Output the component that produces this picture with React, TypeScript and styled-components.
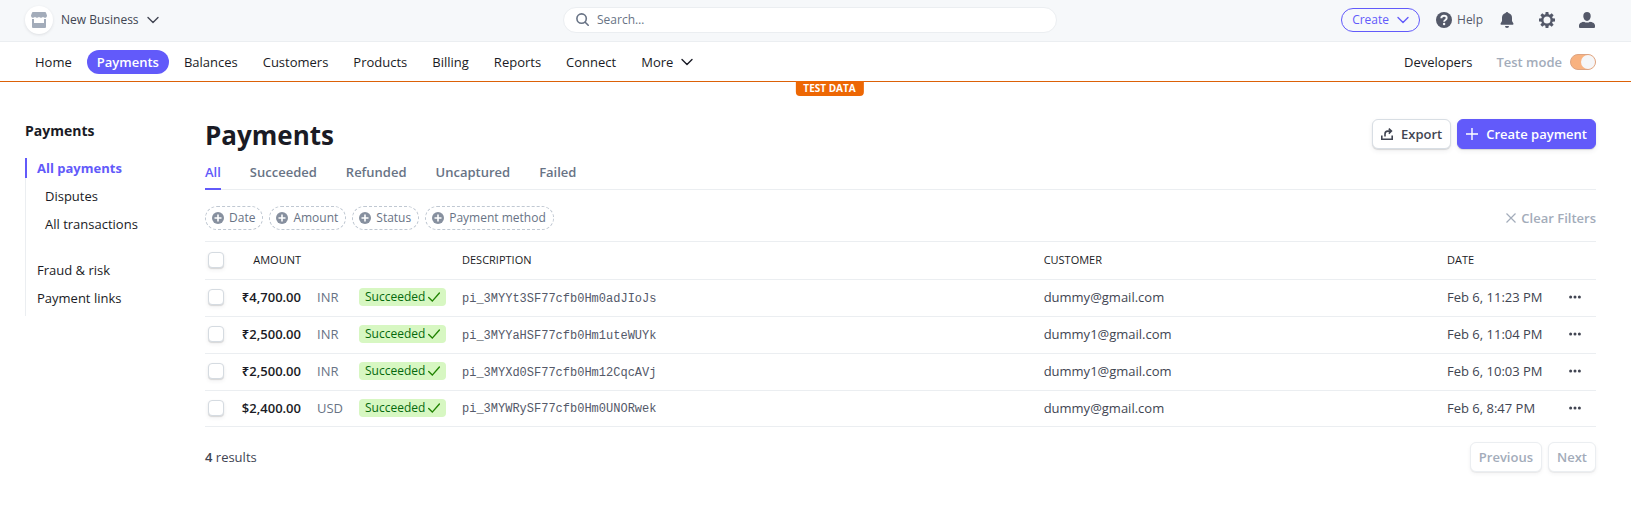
import React from "react";
import styled, { createGlobalStyle, css } from "styled-components";

const color = {
  text: "#1a1b25",
  body: "#414552",
  muted: "#687385",
  faint: "#a3acba",
  icon: "#545969",
  line: "#ebeef1",
  brand: "#625afa",
  orange: "#ed6704",
  orangeLine: "#dc6108",
};

const GlobalStyle = createGlobalStyle`
  *, *::before, *::after { box-sizing: border-box; }
  body {
    margin: 0;
    background: #fff;
    color: ${color.text};
    font: 400 13px/20px "Open Sans", "Noto Sans", sans-serif;
  }
  button, input { font: inherit; color: inherit; }
  button { cursor: pointer; }
  a { color: inherit; text-decoration: none; }
  ul { margin: 0; padding: 0; list-style: none; }
`;

const TopBar = styled.header`
  display: grid;
  grid-template-columns: 1fr minmax(200px, 494px) 1fr;
  align-items: center;
  height: 42px;
  padding: 0 36px 2px 25px;
  background: #f6f8fa;
  border-bottom: 1px solid ${color.line};
`;

const AccountButton = styled.button`
  display: flex;
  align-items: center;
  justify-self: start;
  gap: 8px;
  padding: 0;
  border: 0;
  background: none;
  color: ${color.body};
  font-size: 12px;
  font-weight: 500;
`;

const Avatar = styled.span`
  display: grid;
  place-items: center;
  width: 28px;
  height: 28px;
  border-radius: 50%;
  background: #fff;
  box-shadow: 0 1px 3px rgba(48, 49, 61, 0.12);
`;

const SearchBox = styled.label`
  display: flex;
  align-items: center;
  gap: 8px;
  height: 26px;
  padding: 0 12px;
  border: 1px solid ${color.line};
  border-radius: 13px;
  background: #fff;
`;

const SearchInput = styled.input`
  flex: 1;
  min-width: 0;
  padding: 0;
  border: 0;
  outline: 0;
  background: none;
  font-size: 12px;
  &::placeholder { color: ${color.muted}; opacity: 1; }
`;

const TopActions = styled.div`
  display: flex;
  align-items: center;
  justify-self: end;
  gap: 24px;
`;

const HelpGroup = styled.div`
  display: flex;
  align-items: center;
  gap: 16px;
`;

const CreateMenuButton = styled.button`
  display: flex;
  align-items: center;
  gap: 8px;
  height: 24px;
  padding: 0 10px;
  border: 1px solid ${color.brand};
  border-radius: 12px;
  background: none;
  color: ${color.brand};
  font-size: 12px;
`;

const IconButton = styled.button`
  display: flex;
  align-items: center;
  gap: 5px;
  padding: 0;
  border: 0;
  background: none;
  color: ${color.icon};
  font-size: 12px;
  font-weight: 500;
`;

const NavBar = styled.nav`
  position: relative;
  display: flex;
  align-items: center;
  justify-content: space-between;
  height: 40px;
  padding: 0 35px 0 25px;
  border-bottom: 1px solid ${color.orangeLine};
`;

const NavList = styled.ul`
  display: flex;
  gap: 5px;
`;

const NavLink = styled.a<{ $active?: boolean }>`
  display: flex;
  align-items: center;
  gap: 8px;
  height: 24px;
  padding: 0 10px;
  border-radius: 12px;
  font-weight: 500;
  ${(p) => p.$active && css`
    background: ${color.brand};
    color: #fff;
    font-weight: 600;
  `}
`;

const NavSide = styled.div`
  display: flex;
  align-items: center;
  gap: 14px;
`;

const TestModeLabel = styled.label`
  display: flex;
  align-items: center;
  gap: 8px;
  color: ${color.faint};
  font-weight: 600;
`;

const Toggle = styled.input`
  appearance: none;
  display: flex;
  justify-content: flex-end;
  width: 26px;
  height: 16px;
  margin: 0;
  border: 1px solid #dda482;
  border-radius: 8px;
  background: #f8b280;
  &::before {
    content: "";
    width: 14px;
    height: 14px;
    border-radius: 50%;
    background: #f5f6f8;
  }
`;

const TestBadge = styled.span`
  position: absolute;
  top: 100%;
  left: calc(50% + 14px);
  transform: translateX(-50%);
  padding: 0 8px;
  border-radius: 0 0 4px 4px;
  background: ${color.orange};
  color: #fff;
  font-size: 10px;
  font-weight: 700;
  line-height: 15px;
  white-space: nowrap;
`;

const Page = styled.div`
  display: grid;
  grid-template-columns: 120px minmax(0, 1fr);
  column-gap: 60px;
  align-items: start;
  padding: 37px 35px 32px 25px;
`;

const SideTitle = styled.h2`
  margin: 2px 0 17px;
  font-size: 14px;
  line-height: 20px;
  font-weight: 700;
`;

const SideList = styled.ul`
  display: flex;
  flex-direction: column;
  gap: 8px;
  padding-bottom: 8px;
  border-left: 1px solid ${color.line};
`;

const SideItem = styled.li<{ $nested?: boolean; $spaced?: boolean }>`
  padding-left: ${(p) => (p.$nested ? 19 : 11)}px;
  margin-top: ${(p) => (p.$spaced ? 18 : 0)}px;
  white-space: nowrap;
  &:has([aria-current]) {
    margin-left: -1px;
    padding-left: 10px;
    border-left: 2px solid ${color.brand};
    color: ${color.brand};
    font-weight: 700;
  }
`;

const TitleRow = styled.div`
  display: flex;
  align-items: flex-start;
  justify-content: space-between;
`;

const Title = styled.h1`
  margin: 0;
  font-size: 26px;
  line-height: 32px;
  font-weight: 700;
`;

const ButtonRow = styled.div`
  display: flex;
  gap: 6px;
`;

const Button = styled.button<{ $primary?: boolean }>`
  display: flex;
  align-items: center;
  gap: 8px;
  height: 30px;
  padding: 0 8px;
  border: 1px solid #d8dee4;
  border-radius: 6px;
  background: #fff;
  box-shadow: 0 1px 1px rgba(0, 0, 0, 0.12), 0 2px 5px rgba(48, 49, 61, 0.08);
  color: ${color.body};
  font-weight: 600;
  ${(p) => p.$primary && css`
    border-color: ${color.brand};
    background: ${color.brand};
    color: #fff;
  `}
  &:disabled {
    border-color: ${color.line};
    box-shadow: 0 1px 1px rgba(0, 0, 0, 0.06), 0 2px 4px rgba(48, 49, 61, 0.05);
    color: ${color.faint};
    cursor: default;
  }
`;

const Tabs = styled.div`
  display: flex;
  gap: 29px;
  margin-top: 11px;
  border-bottom: 1px solid ${color.line};
`;

const Tab = styled.button<{ $active?: boolean }>`
  height: 28px;
  margin-bottom: -1px;
  padding: 0 0 6px;
  border: 0;
  border-bottom: 2px solid ${(p) => (p.$active ? color.brand : "transparent")};
  background: none;
  color: ${(p) => (p.$active ? color.brand : color.muted)};
  font-weight: 600;
`;

const FilterBar = styled.div`
  display: flex;
  align-items: center;
  justify-content: space-between;
  padding: 16px 0 11px;
`;

const FilterChip = styled.button`
  display: flex;
  align-items: center;
  gap: 5px;
  height: 24px;
  padding: 0 7px 0 6px;
  border: 1px dashed #c0c8d2;
  border-radius: 12px;
  background: none;
  color: ${color.muted};
  font-size: 12px;
  font-weight: 500;
`;

const ClearButton = styled.button`
  display: flex;
  align-items: center;
  gap: 5px;
  padding: 0;
  border: 0;
  background: none;
  color: ${color.faint};
  font-weight: 600;
`;

const Table = styled.table`
  width: 100%;
  table-layout: fixed;
  border-collapse: separate;
  border-spacing: 0;
  border-top: 1px solid ${color.line};
`;

const Column = styled.col<{ $width?: string }>`
  width: ${(p) => p.$width ?? "auto"};
`;

const HeadCell = styled.th<{ $right?: boolean }>`
  height: 38px;
  padding: 0 8px 1px;
  border-bottom: 1px solid ${color.line};
  font-size: 11px;
  line-height: 16px;
  font-weight: 400;
  text-align: ${(p) => (p.$right ? "right" : "left")};
`;

const Cell = styled.td<{ $kind?: "amount" | "currency" | "code" }>`
  height: 37px;
  padding: 0 8px 2px;
  border-bottom: 1px solid ${color.line};
  color: ${color.body};
  white-space: nowrap;
  tr:last-child > & { height: 36px; }
  ${(p) => p.$kind === "amount" && css`
    padding-left: 0;
    color: ${color.text};
    font-weight: 600;
    text-align: right;
  `}
  ${(p) => p.$kind === "currency" && css`color: ${color.muted};`}
  ${(p) => p.$kind === "code" && css`
    padding: 1px 8px 0;
    color: ${color.icon};
    font-family: "Liberation Mono", monospace;
    font-size: 12px;
  `}
`;

const CheckBox = styled.input`
  appearance: none;
  display: block;
  width: 16px;
  height: 16px;
  margin: 0 0 0 -5px;
  border: 1px solid #d5dbe1;
  border-radius: 4px;
  background: #fff;
  box-shadow: 0 1px 1px rgba(0, 0, 0, 0.12), 0 2px 4px rgba(48, 49, 61, 0.07);
`;

const StatusBadge = styled.span`
  display: flex;
  align-items: center;
  justify-content: space-between;
  height: 18px;
  padding: 0 6px;
  border-radius: 4px;
  background: #d7f7c2;
  color: #05690d;
  font-size: 12px;
  line-height: 18px;
  font-weight: 500;
`;

const RowMenu = styled.button`
  display: flex;
  padding: 0;
  border: 0;
  background: none;
  color: ${color.body};
`;

const Footer = styled.footer`
  display: flex;
  align-items: center;
  justify-content: space-between;
  padding-top: 15px;
  color: ${color.body};
`;

const Count = styled.span`
  font-weight: 600;
`;

type GlyphProps = { size?: number; children: React.ReactNode; box?: number };
const Glyph = ({ size = 16, box = 16, children }: GlyphProps) => (
  <svg width={size} height={size} viewBox={`0 0 ${box} ${box}`} fill="currentColor" aria-hidden="true">
    {children}
  </svg>
);

const Chevron = () => (
  <Glyph size={12} box={12}>
    <path d="M1 3.500 6 8.500 11 3.500" fill="none" stroke="currentColor" strokeWidth="1.400" strokeLinecap="round" strokeLinejoin="round" />
  </Glyph>
);

const StoreIcon = () => (
  <Glyph>
    <g fill="#a3acba">
      <path d="M2 0h12a1 1 0 0 1 1 .7L16 3.4c0 1.5-1 2.3-2 2.3-.9 0-1.6-.4-2-1-.4.6-1.1 1-2 1s-1.600-.4-2-1c-.4.6-1.100 1-2 1s-1.600-.4-2-1c-.4.6-1.100 1-2 1-1 0-2-.8-2-2.300L1 .7A1 1 0 0 1 2 0Z" />
      <path d="M1 7h2v4h10V7h2v8a1 1 0 0 1-1 1H2a1 1 0 0 1-1-1Z" />
    </g>
  </Glyph>
);

const SearchIcon = () => (
  <Glyph size={13} box={13}>
    <g fill="none" stroke="#687385" strokeWidth="1.6" strokeLinecap="round">
      <circle cx="5.600" cy="5.600" r="4.700" />
      <path d="m9.200 9.200 3 3" />
    </g>
  </Glyph>
);

const HelpIcon = () => (
  <Glyph>
    <circle cx="8" cy="8" r="8" />
    <path d="M5.300 6.300C5.300 4.600 6.400 3.700 8 3.700s2.700.9 2.700 2.300c0 1.900-2.600 1.900-2.600 3.700" fill="none" stroke="#f6f8fa" strokeWidth="1.900" />
    <circle cx="8.100" cy="12" r="1.200" fill="#f6f8fa" />
  </Glyph>
);

const BellIcon = () => (
  <Glyph>
    <path d="M8 0a1.500 1.500 0 0 1 1.400 1A5 5 0 0 1 13 5.800V9l1.400 2.600c.3.600 0 1.200-.7 1.200H2.300c-.7 0-1-.6-.7-1.200L3 9V5.800A5 5 0 0 1 6.600 1 1.500 1.500 0 0 1 8 0Z" />
    <path d="M6 14h4a2 2 0 0 1-4 0Z" />
  </Glyph>
);

const GearIcon = () => (
  <Glyph>
    {[0, 45, 90, 135, 180, 225, 270, 315].map((angle) => (
      <path key={angle} d="M6.600 0h2.800l.4 3.500H6.200Z" transform={`rotate(${angle} 8 8)`} />
    ))}
    <circle cx="8" cy="8" r="4.700" fill="none" stroke="currentColor" strokeWidth="2.400" />
  </Glyph>
);

const PersonIcon = () => (
  <Glyph>
    <path d="M8 0c2.200 0 3.700 1.600 3.700 4 0 2.600-1.600 4.900-3.700 4.900S4.300 6.600 4.300 4C4.300 1.600 5.800 0 8 0Z" />
    <path d="M0 13.500C0 11 3 10 5 9.700c1.700 1.200 4.300 1.200 6 0 2 .3 5 1.300 5 3.800V15a1 1 0 0 1-1 1H1a1 1 0 0 1-1-1Z" />
  </Glyph>
);

const ExportIcon = () => (
  <Glyph size={12} box={12}>
    <g fill="none" stroke="currentColor" strokeWidth="1.600">
      <path d="M.8 7.500v3.700h10.400V7.500" />
      <path d="M4 8.500V6c0-1.900 1-2.900 2.800-2.900H10" />
      <path d="M7.800.6 10.400 3.100 7.800 5.600" />
    </g>
  </Glyph>
);

const PlusIcon = () => (
  <Glyph size={12} box={12}>
    <path d="M6 0v12M0 6h12" stroke="currentColor" strokeWidth="1.400" />
  </Glyph>
);

const PlusCircle = () => (
  <Glyph size={12} box={12}>
    <circle cx="6" cy="6" r="6" fill="#87909f" />
    <path d="M6 2.500v7M2.500 6h7" stroke="#fff" strokeWidth="1.600" />
  </Glyph>
);

const CrossIcon = () => (
  <Glyph size={10} box={10}>
    <path d="m.5.5 9 9M9.500.5l-9 9" stroke="currentColor" strokeWidth="1.200" />
  </Glyph>
);

const CheckIcon = () => (
  <Glyph size={12} box={12}>
    <path d="m.7 6.500 3.600 3.600L11.400 2" fill="none" stroke="#228403" strokeWidth="1.400" strokeLinecap="round" />
  </Glyph>
);

const DotsIcon = () => (
  <Glyph size={12} box={12}>
    <circle cx="1.600" cy="6" r="1.500" />
    <circle cx="6" cy="6" r="1.500" />
    <circle cx="10.400" cy="6" r="1.500" />
  </Glyph>
);

const navItems = ["Home", "Payments", "Balances", "Customers", "Products", "Billing", "Reports", "Connect"];
const tabs = ["All", "Succeeded", "Refunded", "Uncaptured", "Failed"];
const filters = ["Date", "Amount", "Status", "Payment method"];
const payments = [
  { amount: "₹4,700.00", currency: "INR", id: "pi_3MYYt3SF77cfb0Hm0adJIoJs", customer: "dummy@gmail.com", date: "Feb 6, 11:23 PM" },
  { amount: "₹2,500.00", currency: "INR", id: "pi_3MYYaHSF77cfb0Hm1uteWUYk", customer: "dummy1@gmail.com", date: "Feb 6, 11:04 PM" },
  { amount: "₹2,500.00", currency: "INR", id: "pi_3MYXd0SF77cfb0Hm12CqcAVj", customer: "dummy1@gmail.com", date: "Feb 6, 10:03 PM" },
  { amount: "$2,400.00", currency: "USD", id: "pi_3MYWRySF77cfb0Hm0UNORwek", customer: "dummy@gmail.com", date: "Feb 6, 8:47 PM" },
];

export default function App() {
  return (
    <>
      <GlobalStyle />
      <TopBar>
        <AccountButton>
          <Avatar><StoreIcon /></Avatar>
          New Business
          <Chevron />
        </AccountButton>
        <SearchBox>
          <SearchIcon />
          <SearchInput type="text" placeholder="Search…" aria-label="Search" />
        </SearchBox>
        <TopActions>
          <HelpGroup>
            <CreateMenuButton>Create <Chevron /></CreateMenuButton>
            <IconButton><HelpIcon />Help</IconButton>
            <IconButton aria-label="Notifications"><BellIcon /></IconButton>
          </HelpGroup>
          <IconButton aria-label="Settings"><GearIcon /></IconButton>
          <IconButton aria-label="Profile"><PersonIcon /></IconButton>
        </TopActions>
      </TopBar>

      <NavBar>
        <NavList>
          {navItems.map((item) => (
            <li key={item}>
              <NavLink href="#" $active={item === "Payments"}>{item}</NavLink>
            </li>
          ))}
          <li><NavLink href="#">More <Chevron /></NavLink></li>
        </NavList>
        <NavSide>
          <NavLink href="#">Developers</NavLink>
          <TestModeLabel>
            Test mode
            <Toggle type="checkbox" role="switch" defaultChecked />
          </TestModeLabel>
        </NavSide>
        <TestBadge>TEST DATA</TestBadge>
      </NavBar>

      <Page>
        <aside>
          <SideTitle>Payments</SideTitle>
          <SideList>
            <SideItem><a href="#" aria-current="page">All payments</a></SideItem>
            <SideItem $nested><a href="#">Disputes</a></SideItem>
            <SideItem $nested><a href="#">All transactions</a></SideItem>
            <SideItem $spaced><a href="#">Fraud &amp; risk</a></SideItem>
            <SideItem><a href="#">Payment links</a></SideItem>
          </SideList>
        </aside>

        <main>
          <TitleRow>
            <Title>Payments</Title>
            <ButtonRow>
              <Button><ExportIcon />Export</Button>
              <Button $primary><PlusIcon />Create payment</Button>
            </ButtonRow>
          </TitleRow>

          <Tabs role="tablist">
            {tabs.map((tab) => (
              <Tab key={tab} role="tab" aria-selected={tab === "All"} $active={tab === "All"}>{tab}</Tab>
            ))}
          </Tabs>

          <FilterBar>
            <ButtonRow>
              {filters.map((filter) => (
                <FilterChip key={filter}><PlusCircle />{filter}</FilterChip>
              ))}
            </ButtonRow>
            <ClearButton><CrossIcon />Clear Filters</ClearButton>
          </FilterBar>

          <Table>
            <colgroup>
              <Column $width="26px" />
              <Column $width="78px" />
              <Column $width="42px" />
              <Column $width="103px" />
              <Column />
              <Column $width="29%" />
              <Column $width="122px" />
              <Column $width="35px" />
            </colgroup>
            <thead>
              <tr>
                <HeadCell><CheckBox type="checkbox" aria-label="Select all payments" /></HeadCell>
                <HeadCell $right>AMOUNT</HeadCell>
                <HeadCell />
                <HeadCell />
                <HeadCell>DESCRIPTION</HeadCell>
                <HeadCell>CUSTOMER</HeadCell>
                <HeadCell>DATE</HeadCell>
                <HeadCell />
              </tr>
            </thead>
            <tbody>
              {payments.map((p) => (
                <tr key={p.id}>
                  <Cell><CheckBox type="checkbox" aria-label={`Select ${p.id}`} /></Cell>
                  <Cell $kind="amount">{p.amount}</Cell>
                  <Cell $kind="currency">{p.currency}</Cell>
                  <Cell><StatusBadge>Succeeded <CheckIcon /></StatusBadge></Cell>
                  <Cell $kind="code">{p.id}</Cell>
                  <Cell>{p.customer}</Cell>
                  <Cell>{p.date}</Cell>
                  <Cell><RowMenu aria-label="More actions"><DotsIcon /></RowMenu></Cell>
                </tr>
              ))}
            </tbody>
          </Table>

          <Footer>
            <span><Count>4</Count> results</span>
            <ButtonRow>
              <Button disabled>Previous</Button>
              <Button disabled>Next</Button>
            </ButtonRow>
          </Footer>
        </main>
      </Page>
    </>
  );
}
